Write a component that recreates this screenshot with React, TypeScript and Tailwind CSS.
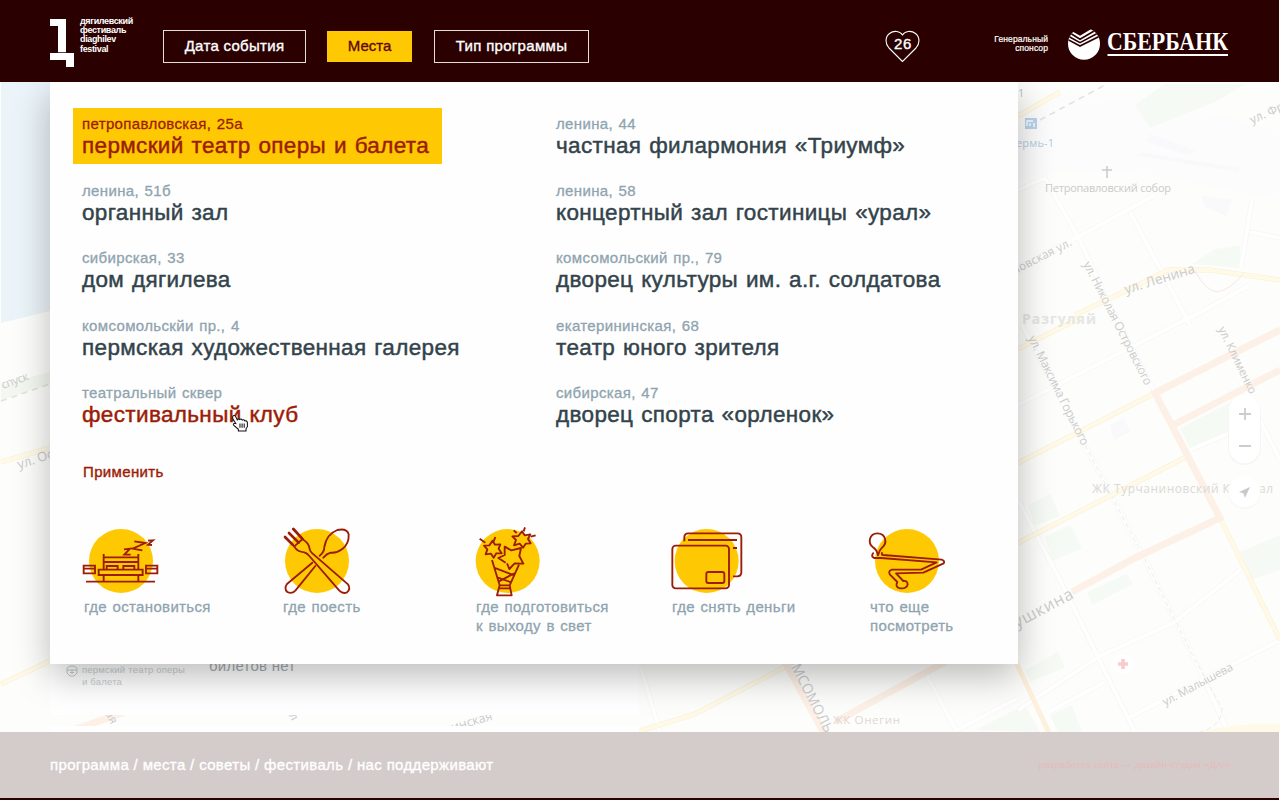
import React from "react";

type Place = { address: string; title: string; state?: "active" | "hover" };

const leftPlaces: Place[] = [
  { address: "петропавловская, 25а", title: "пермский театр оперы и балета", state: "active" },
  { address: "ленина, 51б", title: "органный зал" },
  { address: "сибирская, 33", title: "дом дягилева" },
  { address: "комсомольскйи пр., 4", title: "пермская художественная галерея" },
  { address: "театральный сквер", title: "фестивальный клуб", state: "hover" },
];

const rightPlaces: Place[] = [
  { address: "ленина, 44", title: "частная филармония «Триумф»" },
  { address: "ленина, 58", title: "концертный зал гостиницы «урал»" },
  { address: "комсомольский пр., 79", title: "дворец культуры им. а.г. солдатова" },
  { address: "екатерининская, 68", title: "театр юного зрителя" },
  { address: "сибирская, 47", title: "дворец спорта «орленок»" },
];

function PlaceItem({ place }: { place: Place }) {
  const active = place.state === "active";
  const hover = place.state === "hover";
  return (
    <li
      className={
        "flex h-14 w-fit flex-col whitespace-nowrap pl-[9px] pr-[13px] pt-[6px] " + (active ? "bg-[#fec903]" : "")
      }
    >
      <span
        className={
          "text-[15px] leading-[19px] tracking-[0.35px] [word-spacing:1px] [-webkit-text-stroke:0.3px_currentColor] " +
          (active ? "text-[#9c1c05]" : "text-[#8fa4af]")
        }
      >
        {place.address}
      </span>
      <span
        className={
          "text-[22.5px] leading-[26px] tracking-[0.35px] [word-spacing:1.2px] [-webkit-text-stroke:0.45px_currentColor] " +
          (active || hover ? "text-[#9c1c05]" : "text-[#33434b]")
        }
      >
        {place.title}
      </span>
    </li>
  );
}

function PlaceColumn({ places }: { places: Place[] }) {
  return (
    <ul className="flex flex-col gap-[11.2px]">
      {places.map((p) => (
        <PlaceItem key={p.title} place={p} />
      ))}
    </ul>
  );
}

function CityMap() {
  return (
    <svg className="absolute inset-0 h-[800px] w-[1280px]" viewBox="0 0 1280 800" fontFamily="'Open Sans', 'Noto Sans', sans-serif">
      <rect width="1280" height="800" fill="#fdfdfb" />
      <path d="M1 82H50V311L1 323Z" fill="#ebf4f9" />
      <path d="M1 385L50 372V384L1 400Z" fill="#f3f8f0" />
      <path d="M1018 125L1060 95L1150 100L1280 130V200L1150 175L1060 170L1018 180Z" fill="#fcfcfc" />
      <g fill="#f9f9fc">
        <path d="M1150 134L1196 150L1190 156L1147 142Z" />
        <path d="M1140 152L1240 168L1238 172L1138 156Z" />
        <path d="M1202 196L1232 200L1226 216L1204 206Z" />
        <path d="M1110 425L1124 418L1130 432L1114 440Z" />
      </g>
      <g fill="#f6faf5">
        <path d="M1135 105L1165 84H1245L1215 102L1150 128Z" />
        <path d="M1192 264L1215 249L1240 246V268Z" />
        <path d="M1180 428L1235 400L1228 433L1190 449Z" />
        <path d="M1028 505L1050 494L1060 516L1034 526Z" />
        <path d="M1045 537L1070 525L1082 548L1052 561Z" />
        <path d="M1087 592L1127 574L1133 584L1092 605Z" />
        <path d="M1025 670L1058 652L1065 668L1030 682Z" />
        <path d="M1050 715L1072 705L1082 732H1058Z" />
        <path d="M975 730L1025 705L1040 732Z" />
        <path d="M1240 552L1280 535V570L1250 580Z" />
      </g>
      <g fill="none" stroke="#f6f6f4" strokeWidth="5.200">
        <path d="M1018 190L1045 178L1078 237L1018 268M1078 237L1155 195M1130 212L1190 325M1252 200L1241 267M1250 232L1280 238" />
        <path d="M1078 237L1110 305L1155 393M1018 405L1200 312M1022 325L1085 445L1145 560L1195 660L1228 732" />
        <path d="M1018 500L1060 580L1135 732M1018 710L1100 656L1173 623L1215 590L1240 570M1130 717L1280 640M1050 711L1105 682" />
        <path d="M1190 450L1232 432M1280 460L1240 380M925 672L957 732M957 730L1018 698M640 665L660 732M1190 318L1250 285" />
      </g>
      <g fill="none" stroke="#ffffff" strokeWidth="3.800">
        <path d="M1018 190L1045 178L1078 237L1018 268M1078 237L1155 195M1130 212L1190 325M1252 200L1241 267M1250 232L1280 238" />
        <path d="M1078 237L1110 305L1155 393M1018 405L1200 312M1022 325L1085 445L1145 560L1195 660L1228 732" />
        <path d="M1018 500L1060 580L1135 732M1018 710L1100 656L1173 623L1215 590L1240 570M1130 717L1280 640M1050 711L1105 682" />
        <path d="M1190 450L1232 432M1280 460L1240 380M925 672L957 732M957 730L1018 698M640 665L660 732M1190 318L1250 285" />
      </g>
      <g fill="none" stroke="#ececee" strokeDasharray="5 3">
        <path d="M1085 445L1145 560L1195 660L1222 708Q1222 726 1200 732" />
        <path d="M1040 120L1105 85M1 401L50 384" strokeWidth="1.600" strokeDasharray="6 5" stroke="#e2e2e2" />
      </g>
      <g fill="none" stroke="#fbeed3" strokeWidth="5">
        <path d="M1018 116L1060 92M1075 315L1140 284L1168 270H1210L1280 280" />
        <path d="M1018 349L1080 318M1018 463L1155 393M1018 543L1190 455M1220 518L1280 640M640 731L695 714L785 667M1 684L50 661M1 462L50 448" />
      </g>
      <g fill="none" stroke="#fffae8" strokeWidth="4">
        <path d="M1018 116L1060 92M1075 315L1140 284L1168 270H1210L1280 280" />
        <path d="M1018 349L1080 318M1018 463L1155 393M1018 543L1190 455M1220 518L1280 640M640 731L695 714L785 667M1 684L50 661M1 462L50 448" />
      </g>
      <g fill="none" stroke="#fdf0e6" strokeWidth="7">
        <path d="M1280 330L1155 393L1220 518L1135 558L1072 592M1175 424L1280 370M785 662L825 735M835 722L945 662M50 738L125 712M1 756L50 736" />
        <path d="M1016 662L1050 735" stroke="#fdf0dc" strokeWidth="5" />
      </g>
      <path d="M1195 271Q1205 290 1217 292Q1230 290 1243 274" fill="none" stroke="#f8e6e3" />
      <path d="M1200 732Q1240 722 1280 724V732Z" fill="#fffae8" />
      <g fill="#cbcbcb" fontSize="11">
        <text x="1045" y="192" textLength="126">Петропавловский собор</text>
        <text x="1092" y="493" fontSize="12" fill="#dbd9d6" textLength="181">ЖК Турчаниновский Квартал</text>
        <text x="833" y="724" fontSize="11.500" fill="#ddd8d4" textLength="67">ЖК Онегин</text>
        <text x="1022" y="324" fontSize="14" fontWeight="700" fill="#e6e6e3" textLength="74">Разгуляй</text>
        <text transform="translate(1252 124) rotate(-24)" fontSize="12">ул. Фр</text>
        <text transform="translate(996 284) rotate(-27)" fontSize="11.500" textLength="86">ровловская ул.</text>
        <text transform="translate(1126 294) rotate(-17)" fontSize="13.500" textLength="73">ул. Ленина</text>
        <text transform="translate(1083 264) rotate(63)" fontSize="12" textLength="137">ул. Николая Островского</text>
        <text transform="translate(1028 338) rotate(63.500)" fontSize="12" textLength="121">ул. Максима Горького</text>
        <text transform="translate(1218 329) rotate(64)" fontSize="11.500" textLength="73">ул. Клименко</text>
        <text transform="translate(1165 706) rotate(-28)" fontSize="11.500" textLength="78">ул. Малышева</text>
        <text transform="translate(980 648) rotate(-28)" fontSize="16.500" textLength="107">ул. Пушкина</text>
        <text transform="translate(786 657) rotate(63)" fontSize="14" textLength="86">ОМСОМОЛЬ</text>
        <text transform="translate(3 389) rotate(-20)" fontSize="11.500" textLength="28">спуск</text>
        <text transform="translate(19 469) rotate(-18)" fontSize="13">ул. Осинская</text>
        <text transform="translate(442 735) rotate(-17)" fontSize="12.500">щинская</text>
        <text transform="translate(105 713) rotate(63)" fontSize="12">ая</text>
        <text transform="translate(286 710) rotate(63)" fontSize="12">ул</text>
        <text x="1018" y="97" fill="#b5bfd0">1</text>
        <text x="1016" y="147" fill="#b4cce4" textLength="38">ермь-1</text>
      </g>
      <g>
        <rect x="1025" y="118" width="12" height="11" fill="#b8d4ee" />
        <path d="M1027 126V121H1033M1030 123V126M1034 123V127" stroke="#fff" strokeWidth="1.400" fill="none" />
        <path d="M1107 166V178M1102 170H1112" stroke="#c9c9c9" strokeWidth="1.500" />
        <circle cx="1123" cy="664" r="10" fill="#fff" />
        <path d="M1123 659V669M1118 664H1128" stroke="#f8cccc" strokeWidth="3.600" />
      </g>
      <g>
        <rect x="1228" y="395" width="33" height="70" rx="16.500" fill="#f6f6f5" />
        <rect x="1229" y="395" width="31" height="68" rx="15.500" fill="#fff" />
        <circle cx="1244.500" cy="493" r="16" fill="#f7f7f6" />
        <circle cx="1244.500" cy="492" r="15.500" fill="#fff" />
        <path d="M1239 414H1251M1245 408V420M1239 446H1251" stroke="#cccccc" strokeWidth="1.800" />
        <path d="M1239 492L1250 487L1245 498L1243.500 493.500Z" fill="#c9c9c9" />
      </g>
    </svg>
  );
}

function FestivalLogo() {
  return (
    <div className="flex w-[113px] gap-[6px] pt-[17px]">
      <svg className="mt-0.5 h-12 w-6" viewBox="0 0 24 48" fill="#fff">
        <path d="M0 0H16V33.300H8V7H0ZM0 34H24V48H16V41H0Z" />
      </svg>
      <div className="flex flex-col whitespace-nowrap text-[9px] font-bold leading-[9.2px] tracking-[-0.35px]">
        <span>дягилевский</span>
        <span>фестиваль</span>
        <span>diaghilev</span>
        <span>festival</span>
      </div>
    </div>
  );
}

function Sberbank() {
  return (
    <svg className="h-9 w-[161px]" viewBox="1068 26 161 36">
      <defs>
        <clipPath id="disc">
          <circle cx="1084" cy="43.700" r="16" />
        </clipPath>
      </defs>
      <g clipPath="url(#disc)">
        <path d="M1066 28L1080 35.800L1093 28L1104 30V64H1064Z" fill="#fff" />
        <path
          d="M1066 30.500L1080 39.200L1098 28.800M1064 33.800L1080 42.600L1100 32M1064 37.500L1080 46L1102 35"
          fill="none"
          stroke="#2a0000"
          strokeWidth="1.600"
        />
      </g>
      <text x="1107" y="50" fontFamily="'Liberation Serif', serif" fontWeight="700" fontSize="25.500" fill="#fff" textLength="121" lengthAdjust="spacingAndGlyphs">
        СБЕРБАНК
      </text>
      <rect x="1107.500" y="54" width="120.500" height="2" fill="#fff" />
    </svg>
  );
}

function Header() {
  return (
    <header className="relative z-20 mr-px flex h-[82px] shrink-0 bg-[#2a0000] pl-[50px] text-white">
      <FestivalLogo />
      <nav className="flex pt-[30px] text-[15px] tracking-[0.3px] [word-spacing:1px] [-webkit-text-stroke:0.35px_currentColor]">
        <button className="flex h-[33px] w-[143px] items-center justify-center whitespace-nowrap border border-[#e5dcdc]">Дата события</button>
        <button className="ml-[21px] mt-px flex h-[31px] w-[85px] items-center justify-center bg-[#fec903] tracking-normal text-[#5e0a03]">Места</button>
        <button className="ml-[22px] flex h-[33px] w-[155px] items-center justify-center whitespace-nowrap border border-[#e5dcdc]">Тип программы</button>
      </nav>
      <div className="relative ml-[296px] mt-[30px] flex h-8 w-9 justify-center pt-[5px]">
        <svg className="absolute inset-0 h-8 w-9" viewBox="885 30 36 32" fill="none" stroke="#fff" strokeWidth="1.100">
          <path d="M902.500 61.500L889 48C885 43.500 885 37 889.500 33.500C894 30 900 31 902.500 35C905 31 911 30 915.500 33.500C920 37 920 43.500 916 48Z" />
        </svg>
        <span className="text-[15px] leading-[18px] tracking-[0.6px] [-webkit-text-stroke:0.35px_currentColor]">26</span>
      </div>
      <div className="ml-[67px] mt-[35px] w-[60px] whitespace-nowrap text-right text-[8.5px] leading-[9px] tracking-[0.1px] [-webkit-text-stroke:0.2px_currentColor]">
        Генеральный
        <br />
        спонсор
      </div>
      <div className="ml-5 mt-[26px]">
        <Sberbank />
      </div>
    </header>
  );
}

function BedIcon() {
  return (
    <svg className="h-[72px] w-20" viewBox="63 33 240 216" fill="none" stroke="#9c1c05" strokeWidth="5.600">
      <circle cx="183" cy="138" r="96" fill="#fec903" stroke="none" />
      <path d="M131 117V162M235 117V162M131 127H235M131 141H235M140 163V153H173V163M190 163V153H223V163M116 164H248V180H116ZM131 180V199M235 180V199M148 180H235M78 200H285" />
      <path d="M71 152H105V175H71ZM71 161H105M258 152H292V175H258ZM258 161H292" />
      <path d="M192 103L210 101L193 119L212 119M223 79L256 84L218 101L247 106M264 77L279 76L264 89L276 90" />
    </svg>
  );
}

function FoodIcon() {
  return (
    <svg className="h-[72px] w-20" viewBox="663 33 240 216" fill="none" stroke="#9c1c05" strokeWidth="5.600" strokeLinecap="round" strokeLinejoin="round">
      <circle cx="771" cy="138" r="96" fill="#fec903" stroke="none" />
      <path d="M675 66L703 95Q712 111 733 112Q741 114 748 123L838 227Q849 238 861 232Q873 223 864 208L764 121Q750 112 748 98Q746 84 730 74L700 42" />
      <path d="M675 66L698 89M687 54L716 83M700 42L726 70" strokeWidth="8" />
      <path d="M703 94L728 72" />
      <path d="M779 122Q793 112 793 96Q799 58 832 45Q861 39 866 58Q868 86 846 103Q830 115 812 113Q800 116 790 128M757 143L681 207Q671 221 682 231Q695 238 706 227L766 153" />
    </svg>
  );
}

function BouquetIcon() {
  return (
    <svg className="h-[72px] w-20" viewBox="43 33 240 216" fill="none" stroke="#9c1c05" strokeWidth="5.600" strokeLinejoin="round">
      <circle cx="144" cy="138" r="96" fill="#fec903" stroke="none" />
      <path d="M99 77L106 89L122 88L117 101L126 115L110 115L102 128L94 116L78 118L83 103L73 92L89 91Z" />
      <path d="M187 49L195 61L212 58L205 72L213 85L198 86L190 98L180 86L163 91L169 75L158 64L176 63Z" />
      <path d="M138 143L116 129L135 120V95L155 106L184 99L179 123L191 146L165 145L149 162L142 145" />
      <path d="M97 135L120 211H150L178 149M120 211L112 241H156L150 211M103 158L164 181M118 199L166 174M115 188L155 202M117 220H153" />
      <path d="M60 71L77 83M107 66L102 79M162 46L171 54M196 37L192 49M228 61L213 65" />
    </svg>
  );
}

function CardsIcon() {
  return (
    <svg className="h-[72px] w-20" viewBox="631 33 240 216" fill="none" stroke="#9c1c05" strokeWidth="5.600">
      <circle cx="741" cy="138" r="96" fill="#fec903" stroke="none" />
      <rect x="638" y="92" width="170" height="128" rx="10" />
      <rect x="740" y="171" width="54" height="33" rx="6" />
      <path d="M674 79V67Q674 55 686 55H833Q845 55 845 67V172Q845 184 833 184H820M685 75H832M820 99H832" />
    </svg>
  );
}

function SightsIcon() {
  return (
    <svg className="h-[72px] w-20" viewBox="51 33 240 216" fill="none" stroke="#9c1c05" strokeWidth="5.600" strokeLinejoin="round">
      <circle cx="171" cy="138" r="96" fill="#fec903" stroke="none" />
      <path d="M84 121Q81 105 69 97C52 85 58 55 82 55C108 55 113 85 96 98Q87 106 84 121Z" />
      <path d="M71 113Q61 123 72 129H93L260 142L213 164H126Q113 168 120 179L142 201Q134 216 150 220Q170 222 173 208Q172 196 160 198L138 175L220 173L281 145Q286 138 275 134L99 120Q93 119 97 112" />
    </svg>
  );
}

const tips = [
  { icon: <BedIcon />, lines: ["где остановиться"], box: "w-[199px]", shift: "-ml-[3px]" },
  { icon: <FoodIcon />, lines: ["где поесть"], box: "w-[193px]", shift: "-ml-[2px]" },
  { icon: <BouquetIcon />, lines: ["где подготовиться", "к выходу в свет"], box: "w-[196px]", shift: "-ml-[2px]" },
  { icon: <CardsIcon />, lines: ["где снять деньги"], box: "w-[198px]", shift: "-ml-[2px]" },
  { icon: <SightsIcon />, lines: ["что еще", "посмотреть"], box: "w-[100px]", shift: "-ml-[3px]" },
];

function HandCursor() {
  return (
    <svg className="absolute left-[182px] top-[332px] h-[18px] w-[17px]" viewBox="0 0 16 17" fill="#fff" stroke="#111" strokeWidth="1">
      <path d="M3.500 9L0.800 4.500Q0 2 1.800 1.500Q3 1.200 3.800 3L5 5.500Q6 4 7.300 5.200Q8.700 4.200 9.700 5.700Q11.300 5 12.200 6.500Q14 6 14.500 8V12L13.200 14V16H6V14.500L1.500 10.500Q0.500 8.500 3.500 9Z" />
      <path d="M7.500 9V13M9.500 9V13M11.500 9V13" />
    </svg>
  );
}

function PlacesPanel() {
  return (
    <section className="absolute left-[50px] top-[82px] z-10 h-[582px] w-[968px] bg-[#fefefe] shadow-[0_12px_34px_rgba(0,0,0,0.27)]">
      <div className="grid grid-cols-[474px_1fr] pl-[23px] pt-[26px]">
        <PlaceColumn places={leftPlaces} />
        <PlaceColumn places={rightPlaces} />
      </div>
      <button className="ml-[33px] mt-[29px] block text-[15px] leading-[20px] tracking-[0.35px] text-[#9c1c05] [-webkit-text-stroke:0.4px_currentColor]">
        Применить
      </button>
      <ul className="mt-[44px] flex pl-[34px]">
        {tips.map((t) => (
          <li key={t.lines[0]} className={"shrink-0 " + t.box}>
            <div className={t.shift}>{t.icon}</div>
            <p className="-mt-px flex flex-col whitespace-nowrap text-[15px] leading-[19px] tracking-[0.35px] text-[#8fa4af] [word-spacing:1px] [-webkit-text-stroke:0.3px_currentColor]">
              {t.lines.map((l) => (
                <span key={l}>{l}</span>
              ))}
            </p>
          </li>
        ))}
      </ul>
      <HandCursor />
    </section>
  );
}

function EventList() {
  return (
    <div className="relative flex h-full w-[589px] flex-col gap-[11px]">
      <article className="flex h-[633px] shrink-0 items-end bg-white pb-[27px] pl-4">
        <div className="flex w-[143px] gap-1 text-[9.5px] leading-[12px] tracking-[0.2px] text-[#c9cfd3]">
          <svg className="mt-px h-3 w-3" viewBox="0 0 12 12" fill="none" stroke="#c3cacf">
            <path d="M1 5Q1 1 6 1Q11 1 11 5V8L8 11H4L1 8ZM1 5H11M4 7.500H8M6 5V9" />
          </svg>
          <p>
            пермский театр оперы
            <br />и балета
          </p>
        </div>
        <p className="mb-[14px] text-[15px] leading-4 tracking-[0.25px] text-[#a4abb0]">билетов нет</p>
      </article>
      <article className="h-20 shrink-0 bg-white" />
    </div>
  );
}

export default function App() {
  return (
    <div className="relative flex h-[800px] w-[1280px] flex-col overflow-hidden bg-white font-['Liberation_Sans',Arial,sans-serif]">
      <CityMap />
      <Header />
      <main className="h-[650px] overflow-hidden pl-[50px]">
        <EventList />
      </main>
      <PlacesPanel />
      <footer className="relative z-20 mr-px flex h-[68px] items-center justify-between border-b-2 border-[#2a0000] bg-[#d4cbcb] pl-[50px] pr-12">
        <p className="text-[15px] tracking-[0.35px] text-white [-webkit-text-stroke:0.35px_currentColor]">
          программа / места / советы / фестиваль / нас поддерживают
        </p>
        <p className="text-[9.5px] tracking-[0.2px] text-[#e6bbb8]">разработка сайта — дизайн-студия «ДА!»</p>
      </footer>
    </div>
  );
}
